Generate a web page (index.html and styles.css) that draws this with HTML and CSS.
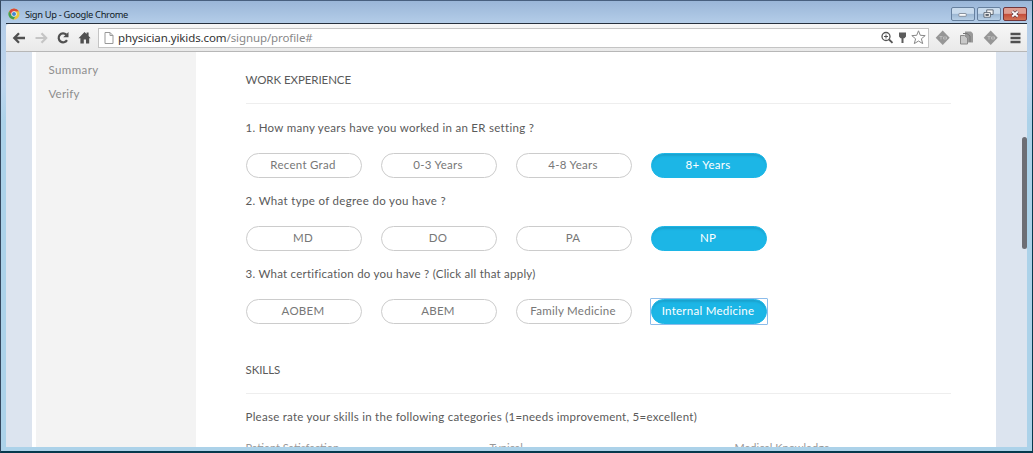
FILE: index.html
```
<!DOCTYPE html>
<html lang="en">
<head>
<meta charset="utf-8">
<title>Sign Up</title>
<link rel="stylesheet" href="styles.css">
</head>
<body>
<div class="window">
  <header class="titlebar">
    <svg class="logo" viewBox="0 0 12 12"><circle cx="6" cy="6" r="5.5" fill="#e9c63c"/><path d="M1.2 3.2A5.5 5.5 0 0 1 10.8 3.3L6 3.4 3.6 7.3Z" fill="#d9483c"/><path d="M1.2 3.2A5.5 5.5 0 0 0 5.5 11.5L8 7.3 3.7 7.4Z" fill="#3f9e55"/><circle cx="6" cy="6" r="2.7" fill="#f3f7fa"/><circle cx="6" cy="6" r="2" fill="#4487cf"/></svg>
    <span class="caption">Sign Up - Google Chrome</span>
    <div class="controls">
      <span class="control"><svg viewBox="0 0 24 12"><rect x="7.5" y="5.5" width="8" height="3" rx=".5" fill="#fff" stroke="#7d8795"/></svg></span>
      <span class="control"><svg viewBox="0 0 24 12"><path d="M9.5 1.5h7v5h-7z" fill="#f5f5f5" stroke="#58616f"/><path d="M6.500 4.500h7v5h-7z" fill="#fff" stroke="#58616f"/><path d="M8.500 6.500h3v1h-3z" stroke="#58616f"/></svg></span>
      <span class="control close"><svg viewBox="0 0 24 12"><path d="M9 3.300l6 5.400M15 3.300l-6 5.400" stroke="#5d3b43" stroke-width="3.500"/><path d="M9 3.300l6 5.400M15 3.300l-6 5.400" stroke="#fff" stroke-width="2"/></svg></span>
    </div>
  </header>
  <nav class="toolbar">
    <svg class="nav-icons" viewBox="0 0 92 27" fill="none" stroke="#505050" stroke-width="2">
      <path d="M8.500 14H19M13 9.200L8.300 14l4.700 4.800" stroke-width="2.300"/>
      <path d="M29.500 14H40M35.500 9.200L40.200 14l-4.700 4.800" stroke="#c5c5c5" stroke-width="2.200"/>
      <path d="M60.300 10.600A4.500 4.500 0 1 0 61 16.200" stroke-width="2.200"/><path d="M62.500 8v5.300h-5.300z" fill="#505050" stroke="none"/>
      <path d="M72.500 14.200L78.500 8l2.100 2.100V8.500h2v3.600l2 2.100h-1.400V19.500h-3.200v-4h-2.200v4h-3.400v-5.300z" fill="#505050" stroke="none"/>
    </svg>
    <div class="omnibox">
      <svg class="doc" viewBox="0 0 10 12"><path d="M1 .5h5L9 3.500v8H1zM6 .5v3h3" fill="#fff" stroke="#999"/></svg>
      <span class="host">physician.yikids.com</span><span class="path">/signup/profile#</span>
      <svg class="box-icons" viewBox="0 0 48 18"><circle cx="6" cy="7.500" r="4" fill="none" stroke="#555" stroke-width="1.300"/><path d="M9 10.500l3.500 3.300" stroke="#555" stroke-width="1.800"/><path d="M4 7.500h4M6 5.500v4" stroke="#555"/><path d="M19 3.500h7v4l-1.500 1.700h-1V14h-2V9.200h-1L19 7.500z" fill="#5c5c5c"/><path d="M38.500 1.800l1.800 4.500 4.900.3-3.800 3.200 1.300 4.800-4.200-2.600-4.200 2.600 1.300-4.800-3.800-3.200 4.900-.3z" fill="#fff" stroke="#888"/></svg>
    </div>
    <svg class="extensions" viewBox="0 0 98 27"><path d="M13.700 6.500l7 7.200-7 7.200-7-7.200z" fill="#969696"/><path d="M10.500 12.500h3m-1.500 0v3m2.500-2.500h3v2h-3z" stroke="#bcbcbc" fill="none"/><path d="M36 7.500h6l2 2v9h-8z" fill="#999"/><path d="M31.500 11.500h4l3 2.500v6h-7z" fill="#c8c8c8" stroke="#8a8a8a"/><path d="M34 9.500h4l3 2.500v6" fill="none" stroke="#777"/><path d="M61.700 6.500l7 7.200-7 7.200-7-7.200z" fill="#969696"/><path d="M58.500 12.500h3m-1.500 0v3m2.500-2.500h3v2h-3z" stroke="#bcbcbc" fill="none"/><path d="M81.500 10h10M81.500 14h10M81.500 18h10" stroke="#505050" stroke-width="2.300"/></svg>
  </nav>
  <div class="viewport">
    <div class="page">
      <aside class="sidebar"><a class="step summary">Summary</a><a class="step verify">Verify</a></aside>
      <main class="content">
        <h2 class="heading work">WORK EXPERIENCE</h2>
        <section class="question">
          <p class="prompt q1">1. How many years have you worked in an ER setting ?</p>
          <div class="choices"><button class="choice">Recent Grad</button><button class="choice">0-3 Years</button><button class="choice">4-8 Years</button><button class="choice selected">8+ Years</button></div>
        </section>
        <section class="question">
          <p class="prompt q2">2. What type of degree do you have ?</p>
          <div class="choices"><button class="choice">MD</button><button class="choice">DO</button><button class="choice">PA</button><button class="choice selected">NP</button></div>
        </section>
        <section class="question">
          <p class="prompt q3">3. What certification do you have ? (Click all that apply)</p>
          <div class="choices"><button class="choice">AOBEM</button><button class="choice">ABEM</button><button class="choice">Family Medicine</button><button class="choice selected focused">Internal Medicine</button></div>
        </section>
        <h2 class="heading skills">SKILLS</h2>
        <p class="prompt rate">Please rate your skills in the following categories (1=needs improvement, 5=excellent)</p>
        <div class="categories"><span>Patient Satisfaction</span><span>Typical</span><span>Medical Knowledge</span></div>
      </main>
    </div>
    <div class="scrollbar"></div>
  </div>
</div>
</body>
</html>
```
FILE: styles.css
```
* { box-sizing: border-box; }
body { margin: 0; overflow: hidden; }
.window {
  width: 1033px; height: 453px; display: flex; flex-direction: column;
  border: solid #06394d; border-width: 1px 1px 2px 1px; border-top-color: #48607f; border-left-color: #35485f;
  padding: 0 5px 4px;
  background: linear-gradient(#9ab6d8 0, #b5cee9 23px, #bdd5ed 85px, #acd2e9 120px, #acd2e9);
}
.titlebar { flex: 0 0 23px; display: flex; padding-left: 2px; border-bottom: 1px solid #26303d; }
.logo { width: 12px; height: 12px; margin-top: 7px; }
.caption { margin: 6px 0 0 5px; font: 9.3px/16px "Noto Sans", sans-serif; color: #111b27; white-space: nowrap; letter-spacing: -.32px; }
.controls { margin-left: auto; display: flex; gap: 2px; padding-top: 6px; }
.control { width: 24px; height: 14px; border: 1px solid #66809f; border-radius: 2px; background: linear-gradient(#c9dbed 45%, #9cb7d3 50%, #b7cfe6); }
.control svg { display: block; width: 22px; height: 12px; }
.close { border-color: #72363b; background: linear-gradient(#df9d91 45%, #c44b38 50%, #d27458); }
.toolbar { flex: 0 0 28px; display: flex; background: linear-gradient(#f7f7f7, #e9e9e9); border-bottom: 1px solid #b7b7b7; border-top-left-radius: 3px; }
.nav-icons { width: 92px; height: 27px; flex: none; }
.omnibox { width: 831px; height: 20px; margin-top: 4px; border: 1px solid #c4c4c4; background: #fff; display: flex; align-items: center; padding-left: 5px; }
.doc { width: 10px; height: 12px; margin-right: 4px; }
.host, .path { font: 11.500px/18px "Noto Sans", sans-serif; color: #333; white-space: nowrap; }
.host { letter-spacing: -.1px; }
.path { color: #888; letter-spacing: -.1px; }
.box-icons { width: 48px; height: 18px; margin-left: auto; }
.extensions { width: 98px; height: 27px; flex: none; }
.viewport { flex: 1; min-height: 0; overflow: hidden; display: flex; position: relative; background: #dce4ef; padding-left: 26px; }
.page { width: 964px; display: flex; background: #fff; padding-left: 4px; }
.sidebar { flex: 0 0 160px; background: #f3f3f3; padding: 6px 0 0 12.500px; display: flex; flex-direction: column; }
.step { font: 11.500px/24px Lato, sans-serif; color: #8e8e8e; align-self: flex-start; white-space: nowrap; letter-spacing: .4px; }
.verify { letter-spacing: .2px; }
.content { width: 755px; flex: none; padding: 20px 0 0 49.500px; color: #5a5a5a; font: 11.500px/16px Lato, sans-serif; }
.heading { margin: 0 0 16px; height: 32px; font-size: 11.500px; font-weight: 400; line-height: 16px; border-bottom: 1px solid #eee; letter-spacing: -.07px; }
.prompt { margin: 0; height: 16px; white-space: nowrap; font-variant-ligatures: none; }
.q1 { letter-spacing: .29px; }
.q2 { letter-spacing: .33px; }
.q3 { letter-spacing: .24px; }
.rate { letter-spacing: .26px; }
.question { height: 73.200px; }
.choices { display: flex; gap: 19px; margin-top: 17px; }
.choice { width: 116px; height: 25px; border: 1px solid #ccc; border-radius: 13px; background: #fff; color: #777; font: 11.500px/21px Lato, sans-serif; padding: 0 1px 2px 0; white-space: nowrap; letter-spacing: .27px; }
.selected { color: #fff; border-color: #1cb6e6; background: #1cb6e6; box-shadow: inset 0 3px 2px -1px #1ba3cf; }
.focused { position: relative; outline: none; }
.focused::after { content: ""; position: absolute; inset: -2px; border: 1px solid #8bbceb; border-radius: 1px; }
.skills { margin-top: 22px; margin-bottom: 15px; }
.categories { display: grid; grid-template-columns: 244px 245px 1fr; margin-top: 15px; font-size: 11px; color: #999; }
.scrollbar { position: absolute; right: 0; top: 85px; width: 5px; height: 112px; border-radius: 3px; background: #6d6e75; }
```
